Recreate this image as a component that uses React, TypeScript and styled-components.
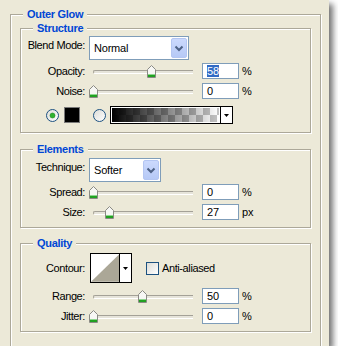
import React from "react";
import styled, { createGlobalStyle } from "styled-components";

const GlobalStyle = createGlobalStyle`
  html, body {
    margin: 0;
    padding: 0;
    background: #fff;
  }
  body {
    font-family: "Liberation Sans", Arial, sans-serif;
    font-size: 11px;
    color: #000;
  }
`;

const Panel = styled.div`
  width: 329px;
  height: 346px;
  box-sizing: border-box;
  padding: 14px 0 0 10px;
  background: #ece9d8;
  overflow: hidden;
  box-shadow: 4px 4px 6px rgba(0, 0, 0, 0.55);
`;

const Group = styled.div<{ $outer?: boolean; $mt?: number; $pb?: number }>`
  box-sizing: border-box;
  display: flex;
  flex-direction: column;
  width: ${(p) => (p.$outer ? 311 : 291)}px;
  height: ${(p) => (p.$outer ? "400px" : "auto")};
  margin: ${(p) => (p.$outer ? "0" : `${p.$mt ?? 0}px 0 0 9px`)};
  padding-bottom: ${(p) => p.$pb ?? 0}px;
  border: 1px solid #aca899;
  box-shadow: inset 1px 1px 0 #fff, 1px 1px 0 #fff;
`;

const Title = styled.div`
  align-self: flex-start;
  margin: -8px 0 0 12px;
  padding: 0 4px;
  height: 14px;
  line-height: 14px;
  background: #ece9d8;
  color: #0046d5;
  font-weight: bold;
  letter-spacing: -0.3px;
`;

const Row = styled.div<{ $mt: number; $h: number }>`
  display: flex;
  align-items: center;
  height: ${(p) => p.$h}px;
  margin-top: ${(p) => p.$mt}px;
  line-height: 14px;
`;

const Label = styled.div<{ $top?: boolean }>`
  flex: none;
  width: 64px;
  margin-right: 4px;
  text-align: right;
  letter-spacing: -0.4px;
  ${(p) => (p.$top ? "align-self: flex-start; margin-top: 2px;" : "")}
`;

const Select = styled.div<{ $w: number }>`
  box-sizing: border-box;
  display: flex;
  align-items: center;
  justify-content: space-between;
  width: ${(p) => p.$w}px;
  height: 24px;
  padding: 1px 1px 1px 4px;
  border: 1px solid #7f9db9;
  background: #fff;
  letter-spacing: -0.2px;
`;

const DropButton = styled.div`
  box-sizing: border-box;
  display: flex;
  align-items: center;
  justify-content: center;
  width: 16px;
  height: 20px;
  border: 1px solid #b4c6f2;
  border-radius: 2px;
  background: linear-gradient(#cbd9fd, #b6c9f6);
`;

const Slider = styled.div`
  position: relative;
  flex: none;
  width: 108px;
  height: 16px;
  padding: 0 4px;
  box-sizing: border-box;
  display: flex;
  align-items: center;
`;

const Track = styled.div`
  box-sizing: border-box;
  width: 100%;
  height: 4px;
  margin-top: 1px;
  border-top: 1px solid #a4a197;
  border-left: 1px solid #a4a197;
  border-bottom: 1px solid #fff;
  border-radius: 2px 0 0 2px;
  background: #e6e4da;
`;

const Thumb = styled.svg`
  position: absolute;
  top: 2px;
`;

const NumInput = styled.div`
  box-sizing: border-box;
  flex: none;
  width: 37px;
  height: 16px;
  margin-left: 5px;
  padding-left: 4px;
  border: 1px solid #7f9db9;
  background: #fff;
  line-height: 14px;
`;

const Selected = styled.span`
  background: #316ac5;
  color: #fff;
`;

const Unit = styled.span`
  margin-left: 3px;
`;

const Swatch = styled.div`
  box-sizing: border-box;
  width: 16px;
  height: 16px;
  margin-left: 5px;
  border: 1px solid #7a7a7a;
  background: #000;
`;

const GradientPicker = styled.div`
  box-sizing: border-box;
  display: flex;
  width: 123px;
  height: 18px;
  margin-left: 4px;
  border: 1px solid #000;
  background: #fff;
`;

const GradientFill = styled.div`
  flex: 1;
  margin: 1px;
  background-image: linear-gradient(to right, #000, rgba(0, 0, 0, 0)),
    repeating-conic-gradient(#c4c4c4 0 25%, #fff 0 50%);
  background-size: 100% 100%, 14px 14px;
`;

const ArrowBox = styled.div`
  display: flex;
  align-items: center;
  justify-content: center;
  width: 11px;
  border-left: 1px solid #000;
  background: #fff;
`;

const Contour = styled.div`
  box-sizing: border-box;
  display: flex;
  width: 42px;
  height: 30px;
  margin-left: 1px;
  border: 1px solid #000;
  background: #fff;
`;

const Check = styled.div`
  box-sizing: border-box;
  width: 13px;
  height: 13px;
  margin-left: 14px;
  border: 1px solid #1c5180;
  background: linear-gradient(135deg, #dcdcd7, #fff);
`;

const CheckLabel = styled.span`
  margin-left: 3px;
  letter-spacing: -0.4px;
`;

const Spacer = styled.div<{ $w: number }>`
  flex: none;
  width: ${(p) => p.$w}px;
`;

const Chevron = () => (
  <svg width="10" height="7" viewBox="0 0 10 7">
    <path d="M1.5 1.5 L5 5 L8.5 1.5" fill="none" stroke="#4d6185" strokeWidth="2" />
  </svg>
);

const DownArrow = () => (
  <svg width="5" height="3" viewBox="0 0 5 3">
    <path d="M0 0 H5 L2.5 3 Z" fill="#000" />
  </svg>
);

const Radio = ({ checked }: { checked?: boolean }) => (
  <svg width="13" height="13" viewBox="0 0 13 13">
    <defs>
      <linearGradient id="rg" x1="0" y1="0" x2="1" y2="1">
        <stop offset="0" stopColor="#dcdcd7" />
        <stop offset="1" stopColor="#fff" />
      </linearGradient>
    </defs>
    <circle cx="6.5" cy="6.5" r="6" fill="url(#rg)" stroke="#1c5180" />
    {checked && <circle cx="6.5" cy="6.5" r="2.5" fill="#2fb22f" stroke="#1e8a1e" strokeWidth="0.6" />}
  </svg>
);

const SliderField = ({ value }: { value: number }) => (
  <Slider>
    <Track />
    <Thumb width="9" height="13" viewBox="0 0 9 13" style={{ left: 4 + value - 4.5 }}>
      <path d="M0.5 4.5 L4.5 0.5 L8.5 4.5 V12.5 H0.5 Z" fill="#f7f7f4" stroke="#8a8a84" />
      <rect x="1" y="10" width="7" height="2" fill="#21a121" />
      <rect x="1" y="9" width="7" height="1" fill="#8fd68f" />
    </Thumb>
  </Slider>
);

const SliderRow = ({
  label,
  pos,
  value,
  unit,
  mt,
  selected,
}: {
  label: string;
  pos: number;
  value: string;
  unit: string;
  mt: number;
  selected?: boolean;
}) => (
  <Row $mt={mt} $h={16}>
    <Label>{label}</Label>
    <SliderField value={pos} />
    <NumInput>{selected ? <Selected>{value}</Selected> : value}</NumInput>
    <Unit>{unit}</Unit>
  </Row>
);

export default function App() {
  return (
    <>
      <GlobalStyle />
      <Panel>
        <Group $outer>
          <Title>Outer Glow</Title>

          <Group $mt={7} $pb={8}>
            <Title>Structure</Title>
            <Row $mt={1} $h={24}>
              <Label $top>Blend Mode:</Label>
              <Select $w={100}>
                Normal
                <DropButton>
                  <Chevron />
                </DropButton>
              </Select>
            </Row>
            <SliderRow label="Opacity:" pos={58} value="58" unit="%" mt={3} selected />
            <SliderRow label="Noise:" pos={0} value="0" unit="%" mt={4} />
            <Row $mt={7} $h={18}>
              <Spacer $w={25} />
              <Radio checked />
              <Swatch />
              <Spacer $w={13} />
              <Radio />
              <GradientPicker>
                <GradientFill />
                <ArrowBox>
                  <DownArrow />
                </ArrowBox>
              </GradientPicker>
            </Row>
          </Group>

          <Group $mt={16} $pb={7}>
            <Title>Elements</Title>
            <Row $mt={2} $h={24}>
              <Label $top>Technique:</Label>
              <Select $w={72}>
                Softer
                <DropButton>
                  <Chevron />
                </DropButton>
              </Select>
            </Row>
            <SliderRow label="Spread:" pos={0} value="0" unit="%" mt={2} />
            <SliderRow label="Size:" pos={16.5} value="27" unit="px" mt={4} />
          </Group>

          <Group $mt={15} $pb={7}>
            <Title>Quality</Title>
            <Row $mt={3} $h={30}>
              <Label>Contour:</Label>
              <Contour>
                <svg width="29" height="28" viewBox="0 0 29 28">
                  <polygon points="0,28 29,0 29,28" fill="#aba797" />
                </svg>
                <ArrowBox>
                  <DownArrow />
                </ArrowBox>
              </Contour>
              <Check />
              <CheckLabel>Anti-aliased</CheckLabel>
            </Row>
            <SliderRow label="Range:" pos={49.5} value="50" unit="%" mt={5} />
            <SliderRow label="Jitter:" pos={0} value="0" unit="%" mt={4} />
          </Group>
        </Group>
      </Panel>
    </>
  );
}
